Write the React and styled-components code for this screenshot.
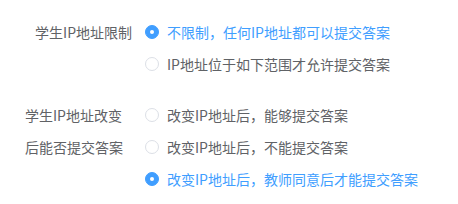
import React, { useState } from 'react';
import styled, { createGlobalStyle } from 'styled-components';

const GlobalStyle = createGlobalStyle`
  body {
    margin: 0;
    background: #fff;
    font-family: "Noto Sans CJK SC", "Noto Sans", sans-serif;
  }
`;

const Form = styled.div`
  padding: 16px 0 0 22px;
  display: flex;
  flex-direction: column;
  gap: 19px;
`;

const Item = styled.div`
  display: grid;
  grid-template-columns: 110px 1fr;
  column-gap: 13px;
  align-items: start;
`;

const Label = styled.div`
  font-size: 14px;
  line-height: 32px;
  color: #606266;
  text-align: ${(p) => (p.$wrap ? 'left' : 'right')};
  padding-left: ${(p) => (p.$wrap ? '3px' : '0')};
  width: ${(p) => (p.$wrap ? '100px' : 'auto')};
`;

const Options = styled.div`
  display: flex;
  flex-direction: column;
`;

const Option = styled.label`
  display: flex;
  align-items: center;
  gap: 8px;
  height: 32px;
  font-size: 14px;
  color: ${(p) => (p.$checked ? '#409eff' : '#606266')};
  cursor: pointer;
`;

const Dot = styled.span`
  box-sizing: border-box;
  width: 14px;
  height: 14px;
  border-radius: 50%;
  border: 1px solid ${(p) => (p.$checked ? '#409eff' : '#dcdfe6')};
  background: ${(p) => (p.$checked ? '#409eff' : '#fff')};
  display: flex;
  align-items: center;
  justify-content: center;

  &::after {
    content: '';
    width: 4px;
    height: 4px;
    border-radius: 50%;
    background: #fff;
    display: ${(p) => (p.$checked ? 'block' : 'none')};
  }
`;

const RadioGroup = ({ options, value, onChange }) => (
  <Options>
    {options.map((o, i) => (
      <Option key={o} $checked={value === i} onClick={() => onChange(i)}>
        <Dot $checked={value === i} />
        {o}
      </Option>
    ))}
  </Options>
);

export default function App() {
  const [limit, setLimit] = useState(0);
  const [change, setChange] = useState(2);

  return (
    <>
      <GlobalStyle />
      <Form>
        <Item>
          <Label>学生IP地址限制</Label>
          <RadioGroup
            value={limit}
            onChange={setLimit}
            options={['不限制，任何IP地址都可以提交答案', 'IP地址位于如下范围才允许提交答案']}
          />
        </Item>
        <Item>
          <Label $wrap>学生IP地址改变后能否提交答案</Label>
          <RadioGroup
            value={change}
            onChange={setChange}
            options={[
              '改变IP地址后，能够提交答案',
              '改变IP地址后，不能提交答案',
              '改变IP地址后，教师同意后才能提交答案',
            ]}
          />
        </Item>
      </Form>
    </>
  );
}
